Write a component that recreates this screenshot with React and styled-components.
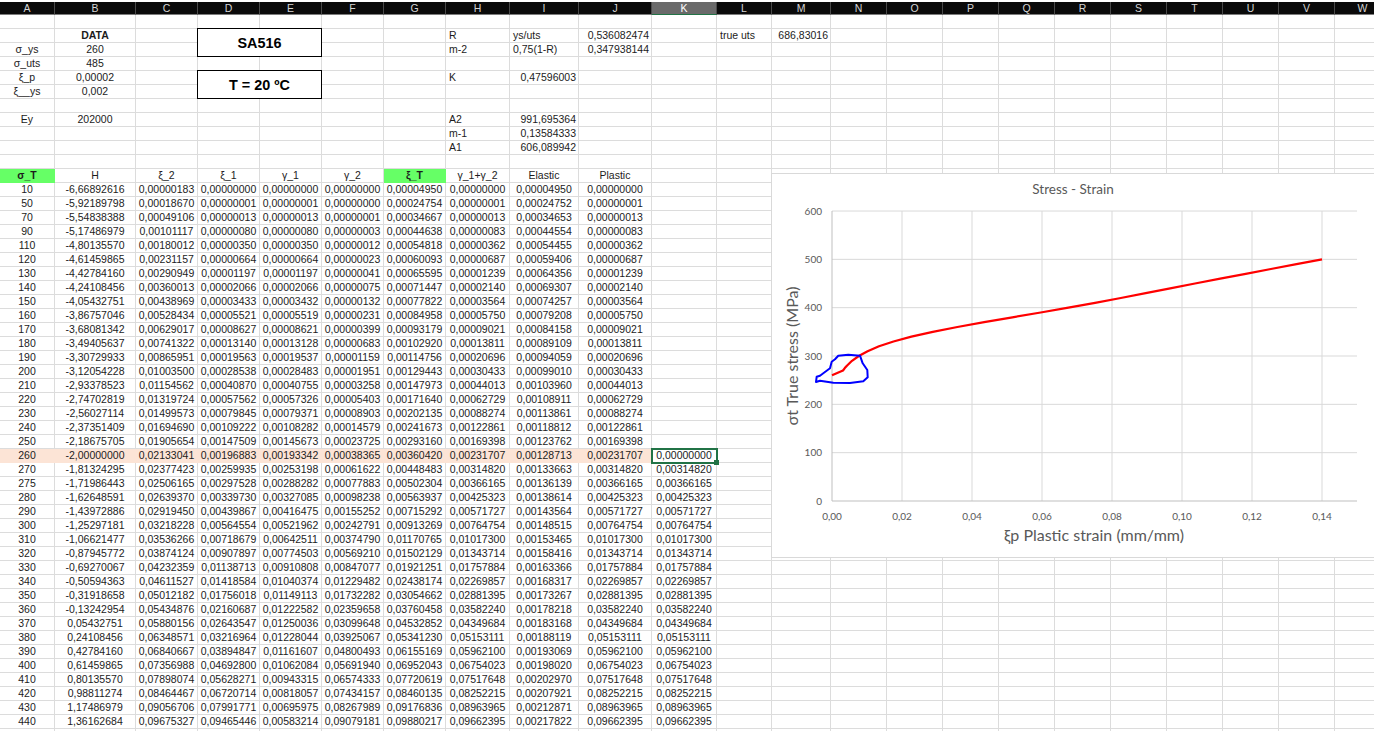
import React from 'react';
import styled, { createGlobalStyle } from 'styled-components';

const COLUMNS = 'ABCDEFGHIJKLMNOPQRSTUVW'.split('');
const WIDTHS = [55, 81, 62, 62, 62, 62, 62, 64, 69, 73, 65, 55, 59, 56, 56, 56, 56, 56, 56, 56, 56, 56, 56];

// stress, H, e_2, e_1, y_1, y_2, e_T, y_1+y_2, elastic
const DATA = [
  ['10', '-6,66892616', '0,00000183', '0,00000000', '0,00000000', '0,00000000', '0,00004950', '0,00000000', '0,00004950'],
  ['50', '-5,92189798', '0,00018670', '0,00000001', '0,00000001', '0,00000000', '0,00024754', '0,00000001', '0,00024752'],
  ['70', '-5,54838388', '0,00049106', '0,00000013', '0,00000013', '0,00000001', '0,00034667', '0,00000013', '0,00034653'],
  ['90', '-5,17486979', '0,00101117', '0,00000080', '0,00000080', '0,00000003', '0,00044638', '0,00000083', '0,00044554'],
  ['110', '-4,80135570', '0,00180012', '0,00000350', '0,00000350', '0,00000012', '0,00054818', '0,00000362', '0,00054455'],
  ['120', '-4,61459865', '0,00231157', '0,00000664', '0,00000664', '0,00000023', '0,00060093', '0,00000687', '0,00059406'],
  ['130', '-4,42784160', '0,00290949', '0,00001197', '0,00001197', '0,00000041', '0,00065595', '0,00001239', '0,00064356'],
  ['140', '-4,24108456', '0,00360013', '0,00002066', '0,00002066', '0,00000075', '0,00071447', '0,00002140', '0,00069307'],
  ['150', '-4,05432751', '0,00438969', '0,00003433', '0,00003432', '0,00000132', '0,00077822', '0,00003564', '0,00074257'],
  ['160', '-3,86757046', '0,00528434', '0,00005521', '0,00005519', '0,00000231', '0,00084958', '0,00005750', '0,00079208'],
  ['170', '-3,68081342', '0,00629017', '0,00008627', '0,00008621', '0,00000399', '0,00093179', '0,00009021', '0,00084158'],
  ['180', '-3,49405637', '0,00741322', '0,00013140', '0,00013128', '0,00000683', '0,00102920', '0,00013811', '0,00089109'],
  ['190', '-3,30729933', '0,00865951', '0,00019563', '0,00019537', '0,00001159', '0,00114756', '0,00020696', '0,00094059'],
  ['200', '-3,12054228', '0,01003500', '0,00028538', '0,00028483', '0,00001951', '0,00129443', '0,00030433', '0,00099010'],
  ['210', '-2,93378523', '0,01154562', '0,00040870', '0,00040755', '0,00003258', '0,00147973', '0,00044013', '0,00103960'],
  ['220', '-2,74702819', '0,01319724', '0,00057562', '0,00057326', '0,00005403', '0,00171640', '0,00062729', '0,00108911'],
  ['230', '-2,56027114', '0,01499573', '0,00079845', '0,00079371', '0,00008903', '0,00202135', '0,00088274', '0,00113861'],
  ['240', '-2,37351409', '0,01694690', '0,00109222', '0,00108282', '0,00014579', '0,00241673', '0,00122861', '0,00118812'],
  ['250', '-2,18675705', '0,01905654', '0,00147509', '0,00145673', '0,00023725', '0,00293160', '0,00169398', '0,00123762'],
  ['260', '-2,00000000', '0,02133041', '0,00196883', '0,00193342', '0,00038365', '0,00360420', '0,00231707', '0,00128713'],
  ['270', '-1,81324295', '0,02377423', '0,00259935', '0,00253198', '0,00061622', '0,00448483', '0,00314820', '0,00133663'],
  ['275', '-1,71986443', '0,02506165', '0,00297528', '0,00288282', '0,00077883', '0,00502304', '0,00366165', '0,00136139'],
  ['280', '-1,62648591', '0,02639370', '0,00339730', '0,00327085', '0,00098238', '0,00563937', '0,00425323', '0,00138614'],
  ['290', '-1,43972886', '0,02919450', '0,00439867', '0,00416475', '0,00155252', '0,00715292', '0,00571727', '0,00143564'],
  ['300', '-1,25297181', '0,03218228', '0,00564554', '0,00521962', '0,00242791', '0,00913269', '0,00764754', '0,00148515'],
  ['310', '-1,06621477', '0,03536266', '0,00718679', '0,00642511', '0,00374790', '0,01170765', '0,01017300', '0,00153465'],
  ['320', '-0,87945772', '0,03874124', '0,00907897', '0,00774503', '0,00569210', '0,01502129', '0,01343714', '0,00158416'],
  ['330', '-0,69270067', '0,04232359', '0,01138713', '0,00910808', '0,00847077', '0,01921251', '0,01757884', '0,00163366'],
  ['340', '-0,50594363', '0,04611527', '0,01418584', '0,01040374', '0,01229482', '0,02438174', '0,02269857', '0,00168317'],
  ['350', '-0,31918658', '0,05012182', '0,01756018', '0,01149113', '0,01732282', '0,03054662', '0,02881395', '0,00173267'],
  ['360', '-0,13242954', '0,05434876', '0,02160687', '0,01222582', '0,02359658', '0,03760458', '0,03582240', '0,00178218'],
  ['370', '0,05432751', '0,05880156', '0,02643547', '0,01250036', '0,03099648', '0,04532852', '0,04349684', '0,00183168'],
  ['380', '0,24108456', '0,06348571', '0,03216964', '0,01228044', '0,03925067', '0,05341230', '0,05153111', '0,00188119'],
  ['390', '0,42784160', '0,06840667', '0,03894847', '0,01161607', '0,04800493', '0,06155169', '0,05962100', '0,00193069'],
  ['400', '0,61459865', '0,07356988', '0,04692800', '0,01062084', '0,05691940', '0,06952043', '0,06754023', '0,00198020'],
  ['410', '0,80135570', '0,07898074', '0,05628271', '0,00943315', '0,06574333', '0,07720619', '0,07517648', '0,00202970'],
  ['420', '0,98811274', '0,08464467', '0,06720714', '0,00818057', '0,07434157', '0,08460135', '0,08252215', '0,00207921'],
  ['430', '1,17486979', '0,09056706', '0,07991771', '0,00695975', '0,08267989', '0,09176836', '0,08963965', '0,00212871'],
  ['440', '1,36162684', '0,09675327', '0,09465446', '0,00583214', '0,09079181', '0,09880217', '0,09662395', '0,00217822'],
];

const cell = (text, extra = {}) => ({ text, ...extra });
const left = (text) => cell(text, { align: 'left' });
const right = (text) => cell(text, { align: 'right' });

// top part of the sheet, sparse by column letter
const TOP_ROWS = [
  {},
  { B: cell('DATA', { bold: true }), D: { box: 'SA516' }, H: left('R'), I: left('ys/uts'), J: right('0,536082474'), L: left('true uts'), M: right('686,83016') },
  { A: cell('σ_ys'), B: cell('260'), H: left('m-2'), I: left('0,75(1-R)'), J: right('0,347938144') },
  { A: cell('σ_uts'), B: cell('485') },
  { A: cell('ξ_p'), B: cell('0,00002'), D: { box: 'T = 20 ºC' }, H: left('K'), I: right('0,47596003') },
  { A: cell('ξ__ys'), B: cell('0,002') },
  {},
  { A: cell('Ey'), B: cell('202000'), H: left('A2'), I: right('991,695364') },
  { H: left('m-1'), I: right('0,13584333') },
  { H: left('A1'), I: right('606,089942') },
  {},
  {
    A: cell('σ_T', { bold: true, fill: '#66ff66' }),
    B: cell('H'),
    C: cell('ξ_2'),
    D: cell('ξ_1'),
    E: cell('γ_1'),
    F: cell('γ_2'),
    G: cell('ξ_T', { bold: true, fill: '#66ff66' }),
    H: cell('γ_1+γ_2'),
    I: cell('Elastic'),
    J: cell('Plastic'),
  },
];

const dataRow = (values) => {
  const row = {};
  const stress = Number(values[0]);
  const fill = stress === 260 ? '#fce4d6' : undefined;
  [...values, values[7]].forEach((text, i) => {
    row[COLUMNS[i]] = cell(text, { fill });
  });
  if (stress === 260) row.K = cell('0,00000000', { selected: true });
  if (stress > 260) row.K = cell(values[7]);
  return row;
};

const ROWS = [...TOP_ROWS, ...DATA.map(dataRow), {}];

const toNumber = (text) => Number(text.replace(',', '.'));
const xPos = (strain) => 832 + strain * 3500;
const yPos = (stress) => 501 - stress * 0.4833;

const curvePoints = DATA.filter((r) => Number(r[0]) >= 260).map((r) => [
  Number(r[0]) === 260 ? 0 : toNumber(r[7]),
  Number(r[0]),
]);
const CURVE = [
  ...curvePoints,
  [0.1037, 450],
  [0.1109, 460],
  [0.1182, 470],
  [0.1254, 480],
  [0.1327, 490],
  [0.14, 500],
]
  .map(([x, y]) => `${xPos(x).toFixed(1)},${yPos(y).toFixed(1)}`)
  .join(' ');

const GlobalStyle = createGlobalStyle`
  html, body {
    margin: 0;
    height: 100%;
    overflow: hidden;
    background: #fff;
  }
`;

const Page = styled.div`
  position: relative;
  width: 1374px;
  height: 731px;
  overflow: hidden;
  padding-top: 2px;
  box-sizing: border-box;
  font-family: "Liberation Sans", Arial, sans-serif;
  font-size: 10.5px;
  color: #1c1c1c;
`;

const Sheet = styled.div`
  display: grid;
  grid-template-columns: ${WIDTHS.map((w) => `${w}px`).join(' ')};
  grid-template-rows: 13px;
  grid-auto-rows: 14px;
  width: max-content;
`;

const ColHead = styled.div`
  display: flex;
  align-items: center;
  justify-content: center;
  box-sizing: border-box;
  background: ${(p) => (p.$active ? '#6a6a6a' : '#0a0a0a')};
  color: ${(p) => (p.$active ? '#fff' : '#d4d4d4')};
  border-right: 1px solid #4a4a4a;
  border-bottom: 1px solid ${(p) => (p.$active ? '#217346' : '#7c7c7c')};
  line-height: 12px;
`;

const Cell = styled.div`
  position: relative;
  box-sizing: border-box;
  padding: ${(p) => (p.$align === 'left' ? '0 0 0 3px' : p.$align === 'right' ? '0 2px 0 0' : '0')};
  border-right: 1px solid ${(p) => (p.$fill ? 'transparent' : '#dcdcdc')};
  border-bottom: 1px solid ${(p) => (p.$fill ? 'transparent' : '#dcdcdc')};
  background: ${(p) => p.$fill || 'transparent'};
  text-align: ${(p) => p.$align || 'center'};
  font-weight: ${(p) => (p.$bold ? 700 : 400)};
  line-height: 13px;
  white-space: nowrap;
`;

const SelectedCell = styled(Cell)`
  z-index: 2;
  outline: 2px solid #217346;
  outline-offset: -1px;

  &::after {
    content: '';
    position: absolute;
    right: -3px;
    bottom: -3px;
    width: 5px;
    height: 5px;
    background: #217346;
  }
`;

const TitleBox = styled.div`
  position: relative;
  z-index: 1;
  grid-column: span 2;
  grid-row: span 2;
  display: flex;
  align-items: center;
  justify-content: center;
  box-sizing: border-box;
  margin: -1px 0 0 -1px;
  background: #fff;
  border: 1px solid #000;
  color: #000;
  font-size: 14.4px;
  font-weight: 700;
`;

const ChartBox = styled.div`
  position: absolute;
  left: 771px;
  top: 173px;
  width: 640px;
  height: 385px;
  box-sizing: border-box;
  background: #fff;
  border: 1px solid #d9d9d9;
  z-index: 1;
`;

const ChartText = styled.text`
  font-family: Lato, "Liberation Sans", sans-serif;
  font-size: ${(p) => p.$size || 10}px;
  fill: #595959;
`;

function Chart() {
  const yTicks = [0, 100, 200, 300, 400, 500, 600];
  const xTicks = [0, 0.02, 0.04, 0.06, 0.08, 0.1, 0.12, 0.14];
  return (
    <ChartBox>
      <svg width="640" height="383" viewBox="772 174 640 383">
        {yTicks.slice(1).map((t) => (
          <line key={t} x1="832" x2="1357" y1={yPos(t)} y2={yPos(t)} stroke="#d9d9d9" />
        ))}
        {xTicks.slice(1).map((t) => (
          <line key={t} x1={xPos(t)} x2={xPos(t)} y1="211" y2="501" stroke="#d9d9d9" />
        ))}
        <line x1="832" x2="832" y1="211" y2="501" stroke="#bfbfbf" />
        <line x1="832" x2="1357" y1="501" y2="501" stroke="#bfbfbf" />

        {yTicks.map((t) => (
          <ChartText key={t} x="822" y={yPos(t) + 3.5} textAnchor="end">
            {t}
          </ChartText>
        ))}
        {xTicks.map((t) => (
          <ChartText key={t} x={xPos(t)} y="520" textAnchor="middle">
            {t.toFixed(2).replace('.', ',')}
          </ChartText>
        ))}

        <ChartText x="1073" y="194" textAnchor="middle" $size={13.5}>
          Stress - Strain
        </ChartText>
        <ChartText x="1094" y="541" textAnchor="middle" $size={16}>
          ξp Plastic strain (mm/mm)
        </ChartText>
        <ChartText x="0" y="0" textAnchor="middle" $size={16} transform="translate(798 356) rotate(-90)">
          σt True stress (MPa)
        </ChartText>

        <polyline points={CURVE} fill="none" stroke="#ff0000" strokeWidth="2.25" strokeLinejoin="round" />
        <path
          d="M816 382 L816.7 376.7 L820 375.7 L823.3 373.3 L830 368.3 L831.7 361.7 L835 359.3 L838.3 355.7 L848.3 354.7 L860 355.7 L862.7 363.3 L867.3 370 L867.7 377.3 L863.3 381.3 L850 383 L833.3 382.7 L820 380.7 Z"
          fill="none"
          stroke="#0000ff"
          strokeWidth="2"
          strokeLinejoin="round"
        />
      </svg>
    </ChartBox>
  );
}

const App = () => {
  return (
    <Page>
      <GlobalStyle />
      <Sheet>
        {COLUMNS.map((c) => (
          <ColHead key={c} $active={c === 'K'}>
            {c}
          </ColHead>
        ))}
        {ROWS.map((row, r) =>
          COLUMNS.map((c) => {
            const key = `${c}${r}`;
            const item = row[c];
            // the merged title boxes take D:E over two rows
            const covered =
              (c === 'E' && ROWS[r].D?.box) ||
              ((c === 'D' || c === 'E') && r > 0 && ROWS[r - 1].D?.box);
            if (covered) return null;
            if (item?.box) return <TitleBox key={key}>{item.box}</TitleBox>;
            const Comp = item?.selected ? SelectedCell : Cell;
            return (
              <Comp key={key} $align={item?.align} $bold={item?.bold} $fill={item?.fill}>
                {item?.text}
              </Comp>
            );
          })
        )}
      </Sheet>
      <Chart />
    </Page>
  );
};

export default App;
